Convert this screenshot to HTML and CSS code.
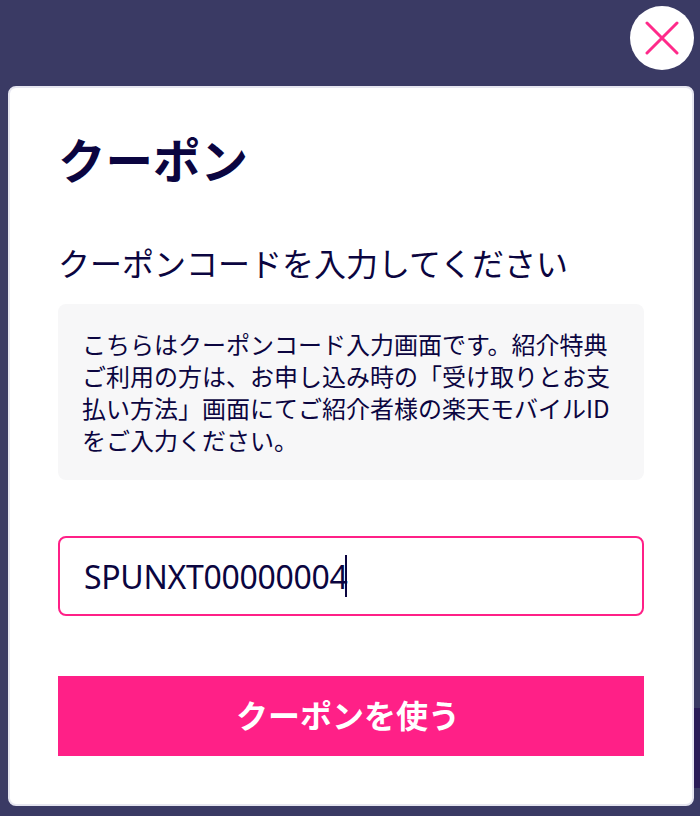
FILE: index.html
```html
<!DOCTYPE html>
<html lang="ja">
<head>
  <meta name="viewport" content="width=device-width, initial-scale=1.0">
  <meta charset="UTF-8" />
  <title>クーポン</title>
  <link rel="stylesheet" href="styles.css">
</head>
<body>
  <div class="overlay">
    <div class="side-strip"></div>
    <button class="close" aria-label="閉じる">
      <svg width="34" height="34" viewBox="0 0 34 34">
        <path d="M2 2 L32 32 M32 2 L2 32" stroke="#ff2a8a" stroke-width="3" stroke-linecap="round" fill="none" />
      </svg>
    </button>
    <div class="modal">
      <h1 class="title">クーポン</h1>
      <p class="subtitle">クーポンコードを入力してください</p>
      <div class="notice">こちらはクーポンコード入力画面です。紹介特典<br>ご利用の方は、お申し込み時の「受け取りとお支<br>払い方法」画面にてご紹介者様の楽天モバイルID<br>をご入力ください。</div>
      <div class="field"><span class="value">SPUNXT00000004</span><span class="caret"></span></div>
      <button class="submit">クーポンを使う</button>
    </div>
  </div>
</body>
</html>
```

FILE: styles.css
```css
* {
  box-sizing: border-box;
}
body {
  margin: 0;
  font-family: "Noto Sans CJK JP", "Noto Sans", sans-serif;
  color: #0b0540;
}
.overlay {
  position: relative;
  height: 816px;
  padding: 86px 6px 10px 8px;
  background: #3a3a64;
  overflow: hidden;
}
.side-strip {
  position: absolute;
  right: 0;
  top: 708px;
  width: 6px;
  height: 80px;
  background: #2a1c58;
}
.close {
  position: absolute;
  top: 6px;
  right: 6px;
  width: 64px;
  height: 64px;
  padding: 0;
  border: none;
  border-radius: 50%;
  background: #fff;
  display: flex;
  align-items: center;
  justify-content: center;
}
.modal {
  height: 720px;
  padding: 37px 48px 0 48px;
  background: #fff;
  border: 2px solid #e6e6f0;
  border-radius: 8px;
}
.title {
  margin: 0;
  font-size: 47.5px;
  line-height: 68px;
  font-weight: 700;
}
.subtitle {
  margin: 47px 0 0 0;
  font-size: 32px;
  line-height: 44px;
}
.notice {
  margin-top: 20px;
  height: 176px;
  padding: 24px 24px;
  background: #f7f7f8;
  border-radius: 8px;
  font-size: 24px;
  line-height: 32px;
}
.field {
  margin-top: 56px;
  height: 80px;
  padding: 0 24px;
  display: flex;
  align-items: center;
  border: 2px solid #ff2087;
  border-radius: 8px;
  font-family: "Noto Sans", sans-serif;
  font-size: 32px;
}
.value {
  letter-spacing: -0.3px;
}
.caret {
  width: 2px;
  height: 42px;
  margin-left: -2px;
  background: #0b0540;
}
.submit {
  display: block;
  width: 100%;
  height: 80px;
  margin-top: 60px;
  padding: 0 6px 4px 0;
  border: none;
  background: #ff2087;
  color: #fff;
  font-family: inherit;
  font-size: 32px;
  font-weight: 700;
}
```
